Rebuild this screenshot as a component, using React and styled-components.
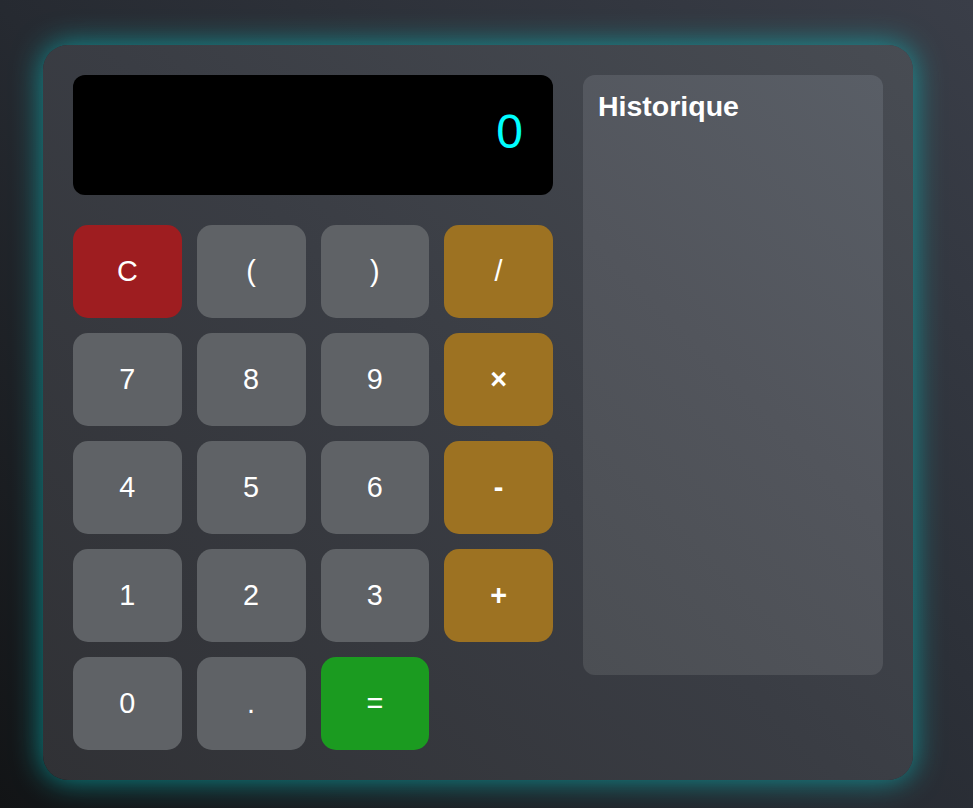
import React, { useState } from "react";
import styled, { createGlobalStyle } from "styled-components";

const GlobalStyle = createGlobalStyle`
  html, body {
    margin: 0;
    height: 100%;
  }
  body {
    background: linear-gradient(45deg, #121416 0%, #262a31 45%, #3a3e48 100%);
    font-family: "Liberation Sans", Arial, sans-serif;
    overflow: hidden;
  }
`;

const KEYS = [
  { label: "C", kind: "clear" },
  { label: "(", kind: "num" },
  { label: ")", kind: "num" },
  { label: "/", kind: "op" },
  { label: "7", kind: "num" },
  { label: "8", kind: "num" },
  { label: "9", kind: "num" },
  { label: "×", kind: "op", bold: true },
  { label: "4", kind: "num" },
  { label: "5", kind: "num" },
  { label: "6", kind: "num" },
  { label: "-", kind: "op", bold: true },
  { label: "1", kind: "num" },
  { label: "2", kind: "num" },
  { label: "3", kind: "num" },
  { label: "+", kind: "op", bold: true },
  { label: "0", kind: "num" },
  { label: ".", kind: "num" },
  { label: "=", kind: "equal" },
];

export default function App() {
  const [value] = useState("0");

  return (
    <>
      <GlobalStyle />
      <Page>
        <Calculator>
          <Main>
            <Display>{value}</Display>
            <Keypad>
              {KEYS.map((k) => (
                <Key key={k.label} $kind={k.kind} $bold={k.bold}>
                  {k.label}
                </Key>
              ))}
            </Keypad>
          </Main>
          <History>
            <HistoryTitle>Historique</HistoryTitle>
          </History>
        </Calculator>
      </Page>
    </>
  );
}

// =========================== STYLES ============================= //

const Page = styled.div`
  padding: 45px 0 0 43px;
`;

const Calculator = styled.div`
  width: 870px;
  box-sizing: border-box;
  padding: 30px;
  display: flex;
  align-items: flex-start;
  gap: 30px;
  border-radius: 25px;
  background: linear-gradient(45deg, #303135 0%, #3a3d44 50%, #484c53 100%);
  box-shadow: 0 0 30px rgba(0, 220, 220, 0.6);
`;

const Main = styled.div`
  width: 480px;
  display: flex;
  flex-direction: column;
  gap: 30px;
`;

const Display = styled.div`
  height: 120px;
  box-sizing: border-box;
  padding: 0 30px 7px;
  display: flex;
  align-items: center;
  justify-content: flex-end;
  background: #000;
  border-radius: 12px;
  color: #00ffff;
  font-size: 48px;
`;

const colors = {
  clear: "#9e1d20",
  num: "#5f6266",
  op: "#9d7222",
  equal: "#1b9b20",
};

const Key = styled.button`
  height: 93px;
  border: none;
  border-radius: 15px;
  background: ${(p) => colors[p.$kind]};
  color: #fff;
  font-family: "Liberation Sans", Arial, sans-serif;
  font-size: 28.8px;
  font-weight: ${(p) => (p.$bold ? "bold" : "normal")};
  padding: 0;
  cursor: pointer;
`;

const Keypad = styled.div`
  display: grid;
  grid-template-columns: repeat(4, 1fr);
  gap: 15px;
`;

const History = styled.div`
  width: 300px;
  height: 600px;
  box-sizing: border-box;
  padding: 17px 15px;
  border-radius: 12px;
  background: linear-gradient(45deg, #4b4e53 0%, #52555c 50%, #595e66 100%);
`;

const HistoryTitle = styled.h3`
  margin: 0;
  color: #fff;
  font-size: 28.5px;
  line-height: 1;
  font-weight: bold;
`;
